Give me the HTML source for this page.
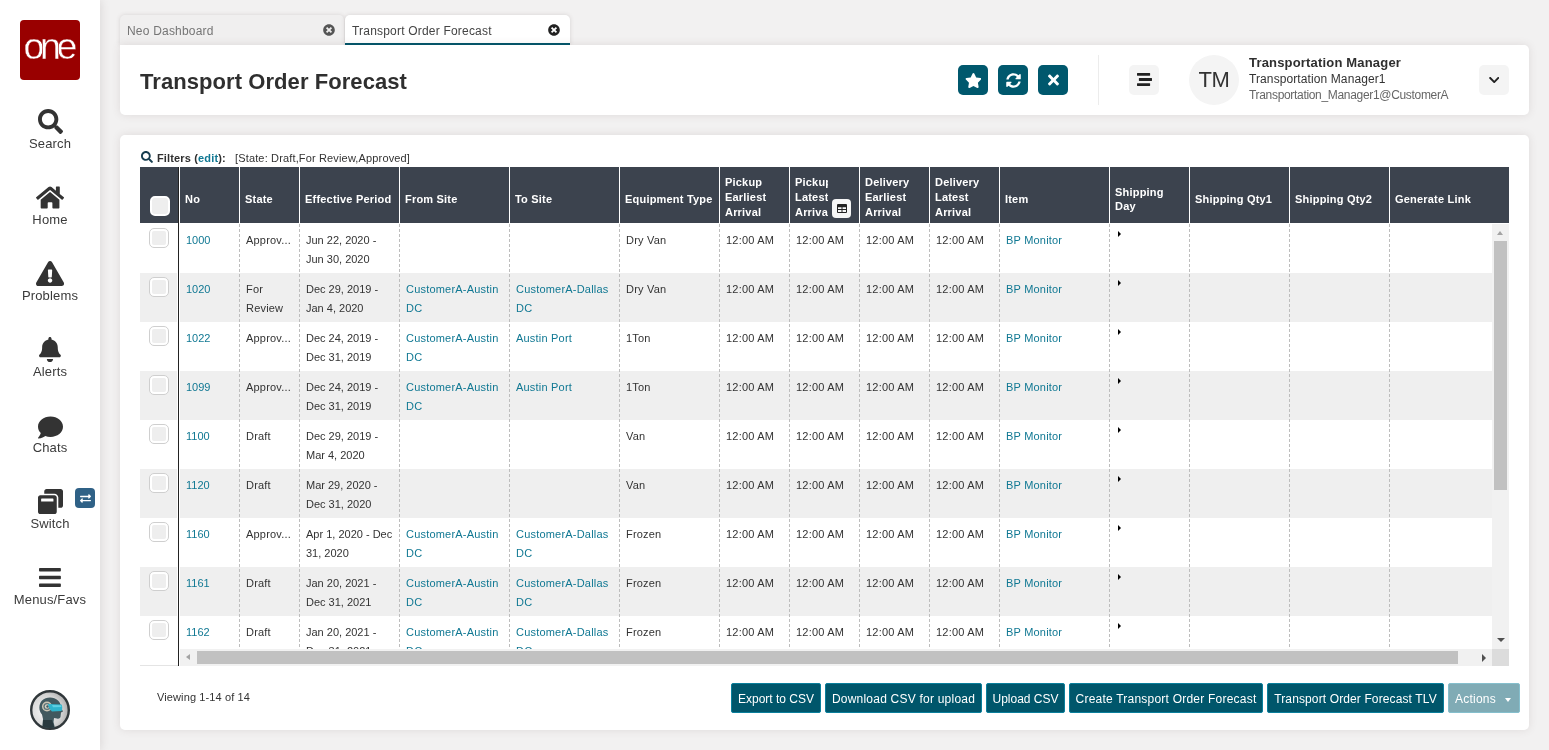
<!DOCTYPE html>
<html lang="en">
<head>
<meta charset="utf-8">
<title>Transport Order Forecast</title>
<style>
*{box-sizing:border-box;margin:0;padding:0}
html,body{width:1549px;height:750px;overflow:hidden}
body{will-change:transform;background:#f2f1f1;font-family:"Liberation Sans","DejaVu Sans",sans-serif;color:#333;position:relative;font-size:11px}
.abs{position:absolute}
#side{left:0;top:0;width:100px;height:750px;background:#fff;box-shadow:0 0 10px rgba(90,70,70,.18)}
#logo{left:20px;top:20px;width:60px;height:60px;background:#990000;border-radius:4px;color:#fff}
.nav{left:0;width:100px;text-align:center;font-size:13px;color:#3a3a3a;line-height:16px;letter-spacing:.15px}
.ico{left:0;width:100px;text-align:center}
.ico svg{display:block;margin:0 auto;fill:#333}
.tab{top:15px;height:30px;font-size:12px;line-height:32px;padding-left:7px;letter-spacing:.2px;white-space:nowrap}
.card{background:#fff;border-radius:5px;box-shadow:0 0 8px rgba(90,70,70,.13)}
.hbtn{width:30px;height:30px;border-radius:5px;background:#00586d;top:65px}
.hbtn svg{position:absolute;fill:#fff}
.gbtn{width:30px;height:30px;border-radius:5px;background:#f4f4f4;top:65px}
</style>
</head>
<body>
<!-- SIDEBAR -->
<div id="side" class="abs"></div>
<div id="logo" class="abs"><svg width="60" height="60" viewBox="0 0 60 60"><text x="3.400" y="39.200" font-family="Liberation Sans, sans-serif" font-size="37.500" fill="#fff" stroke="#990000" stroke-width="0.350" letter-spacing="-4.300">one</text></svg></div>
<div class="abs ico" style="top:108.5px"><svg width="25" height="25" viewBox="0 0 512 512"><path d="M505 442.700L405.300 343c-4.500-4.500-10.600-7-17-7H372c27.600-35.300 44-79.700 44-128C416 93.100 322.900 0 208 0S0 93.100 0 208s93.100 208 208 208c48.300 0 92.700-16.400 128-44v16.300c0 6.400 2.500 12.500 7 17l99.700 99.700c9.400 9.400 24.600 9.400 33.900 0l28.300-28.300c9.400-9.400 9.400-24.600.1-34zM208 336c-70.700 0-128-57.200-128-128 0-70.700 57.200-128 128-128 70.700 0 128 57.200 128 128 0 70.700-57.200 128-128 128z"/></svg></div>
<div class="abs nav" style="top:136px">Search</div>
<div class="abs ico" style="top:184.5px"><svg width="28.1" height="25" viewBox="0 0 576 512"><path d="M280.370 148.260L96 300.110V464a16 16 0 0 0 16 16l112.060-.290a16 16 0 0 0 15.920-16V368a16 16 0 0 1 16-16h64a16 16 0 0 1 16 16v95.640a16 16 0 0 0 16 16.050L464 480a16 16 0 0 0 16-16V300L295.670 148.260a12.190 12.190 0 0 0-15.300 0zM571.600 251.470L488 182.560V44.050a12 12 0 0 0-12-12h-56a12 12 0 0 0-12 12v72.610L318.470 43a48 48 0 0 0-61 0L4.340 251.470a12 12 0 0 0-1.600 16.900l25.500 31A12 12 0 0 0 45.150 301l235.220-193.740a12.190 12.190 0 0 1 15.300 0L530.900 301a12 12 0 0 0 16.900-1.600l25.500-31a12 12 0 0 0-1.700-16.930z"/></svg></div>
<div class="abs nav" style="top:212px">Home</div>
<div class="abs ico" style="top:260.5px"><svg width="28.1" height="25" viewBox="0 0 576 512"><path d="M569.517 440.013C587.975 472.007 564.806 512 527.940 512H48.054c-36.937 0-59.999-40.055-41.577-71.987L246.423 23.985c18.467-32.009 64.720-31.951 83.154 0l239.940 416.028zM288 354c-25.405 0-46 20.595-46 46s20.595 46 46 46 46-20.595 46-46-20.595-46-46-46zm-43.673-165.346l7.418 136c.347 6.364 5.609 11.346 11.982 11.346h48.546c6.373 0 11.635-4.982 11.982-11.346l7.418-136c.375-6.874-5.098-12.654-11.982-12.654h-63.383c-6.884 0-12.356 5.780-11.981 12.654z"/></svg></div>
<div class="abs nav" style="top:288px">Problems</div>
<div class="abs ico" style="top:336.5px"><svg width="21.9" height="25" viewBox="0 0 448 512"><path d="M224 512c35.320 0 63.970-28.650 63.970-64H160.030c0 35.350 28.650 64 63.970 64zm215.390-149.710c-19.320-20.760-55.470-51.990-55.470-154.290 0-77.700-54.480-139.900-127.940-155.160V32c0-17.670-14.320-32-31.980-32s-31.980 14.330-31.980 32v20.840C118.560 68.100 64.080 130.300 64.080 208c0 102.300-36.150 133.530-55.470 154.290-6 6.450-8.660 14.160-8.610 21.710.110 16.400 12.980 32 32.100 32h383.800c19.120 0 32-15.600 32.100-32 .050-7.550-2.610-15.270-8.610-21.710z"/></svg></div>
<div class="abs nav" style="top:364px">Alerts</div>
<div class="abs ico" style="top:414.5px"><svg width="25" height="25" viewBox="0 0 512 512"><path d="M256 32C114.600 32 0 125.100 0 240c0 49.600 21.400 95 57 130.700C44.500 421.100 2.700 466 2.200 466.500c-2.200 2.300-2.800 5.700-1.500 8.700S4.800 480 8 480c66.300 0 116-31.800 140.600-51.400 32.700 12.300 69 19.400 107.400 19.400 141.400 0 256-93.100 256-208S397.400 32 256 32z"/></svg></div>
<div class="abs nav" style="top:440px">Chats</div>
<div class="abs ico" style="top:488.5px"><svg width="25" height="25" viewBox="0 0 512 512"><path d="M512 48v288c0 26.500-21.500 48-48 48h-48V176c0-44.100-35.900-80-80-80H128V48c0-26.500 21.500-48 48-48h288c26.500 0 48 21.500 48 48zM384 176v288c0 26.500-21.500 48-48 48H48c-26.500 0-48-21.500-48-48V176c0-26.500 21.500-48 48-48h288c26.500 0 48 21.500 48 48zm-68 28c0-6.600-5.400-12-12-12H76c-6.600 0-12 5.400-12 12v52h252v-52z"/></svg></div>
<div class="abs" style="left:75px;top:488px;width:20px;height:20px;border-radius:4px;background:#2f6186"><svg style="position:absolute;left:4.500px;top:4.500px;fill:#fff" width="11" height="11" viewBox="0 0 512 512"><path d="M0 168v-16c0-13.255 10.745-24 24-24h360V80c0-21.367 25.899-32.042 40.971-16.971l80 80c9.372 9.373 9.372 24.569 0 33.941l-80 80C409.956 271.982 384 261.456 384 240v-48H24c-13.255 0-24-10.745-24-24zm488 152H128v-48c0-21.314-25.862-32.080-40.971-16.971l-80 80c-9.372 9.373-9.372 24.569 0 33.941l80 80C102.057 463.968 128 453.437 128 432v-48h360c13.255 0 24-10.745 24-24v-16c0-13.255-10.745-24-24-24z"/></svg></div>
<div class="abs nav" style="top:516px">Switch</div>
<div class="abs ico" style="top:564.5px"><svg width="21.9" height="25" viewBox="0 0 448 512"><path d="M16 132h416c8.837 0 16-7.163 16-16V76c0-8.837-7.163-16-16-16H16C7.163 60 0 67.163 0 76v40c0 8.837 7.163 16 16 16zm0 160h416c8.837 0 16-7.163 16-16v-40c0-8.837-7.163-16-16-16H16c-8.837 0-16 7.163-16 16v40c0 8.837 7.163 16 16 16zm0 160h416c8.837 0 16-7.163 16-16v-40c0-8.837-7.163-16-16-16H16c-8.837 0-16 7.163-16 16v40c0 8.837 7.163 16 16 16z"/></svg></div>
<div class="abs nav" style="top:592px">Menus/Favs</div>
<div class="abs" style="left:30px;top:690px;width:40px;height:40px"><svg width="40" height="40" viewBox="0 0 40 40"><defs><radialGradient id="ag" cx="0.35" cy="0.55" r="0.75"><stop offset="0" stop-color="#f4f4f4"/><stop offset="0.6" stop-color="#d4d4d4"/><stop offset="1" stop-color="#9a9a9a"/></radialGradient><clipPath id="ac"><circle cx="20" cy="20" r="18"/></clipPath></defs><circle cx="20" cy="20" r="18.800" fill="url(#ag)" stroke="#30373a" stroke-width="2.400"/><g clip-path="url(#ac)"><path d="M12.500 38 L13 29 L12 24.500 C8.500 21 8.500 14 12 10.500 C16 6.500 24 6.500 28 10.500 C30 12.500 31 15 31 17.500 L33 21.500 L31 22.500 L30.500 27 C30 28.500 28.500 29 27 28.500 L24 28 L23.500 32 L25 38 Z" fill="#41595f"/><path d="M12.500 38 L13 30 L22 30 L24.500 38Z" fill="#2a3a3f"/><circle cx="17" cy="16.500" r="5" fill="#c9c4b4"/><circle cx="17" cy="16.500" r="3.600" fill="#5b7378"/><circle cx="17" cy="16.500" r="2.200" fill="#d8d3c4"/><circle cx="17.500" cy="16.500" r="1.200" fill="#41595f"/><path d="M18 14 L31.500 14.500 C32.500 16.500 32.500 19 31.500 21 L22 21.500 C20 19.500 18.500 17 18 14Z" fill="#2fb4cc"/><path d="M22 15 L31 15.200 L31.500 17 L23 17.200Z" fill="#5fd0e2"/></g></svg></div>

<!-- TABS -->
<div class="abs tab" style="left:120px;width:224px;background:#f0efef;border-radius:5px 5px 0 0;color:#757575;box-shadow:0 0 4px rgba(90,70,70,.18)">Neo Dashboard<svg style="position:absolute;left:203px;top:9px;fill:#555" width="12" height="12" viewBox="0 0 512 512"><path d="M256 8C119 8 8 119 8 256s111 248 248 248 248-111 248-248S393 8 256 8zm121.600 313.100c4.700 4.700 4.700 12.300 0 17L338 377.600c-4.700 4.700-12.300 4.700-17 0L256 312l-65.100 65.600c-4.700 4.700-12.300 4.700-17 0L134.400 338c-4.700-4.700-4.700-12.300 0-17l65.600-65-65.600-65.100c-4.700-4.700-4.700-12.300 0-17l39.600-39.600c4.700-4.700 12.300-4.700 17 0l65 65.700 65.100-65.600c4.700-4.700 12.300-4.700 17 0l39.600 39.600c4.700 4.700 4.700 12.300 0 17L312 256l65.600 65.100z"/></svg></div>
<div class="abs tab" style="left:345px;width:225px;background:#fff;border-radius:5px 5px 0 0;color:#444;box-shadow:0 0 4px rgba(90,70,70,.18)">Transport Order Forecast<svg style="position:absolute;left:203px;top:9px;fill:#222" width="12" height="12" viewBox="0 0 512 512"><path d="M256 8C119 8 8 119 8 256s111 248 248 248 248-111 248-248S393 8 256 8zm121.600 313.100c4.700 4.700 4.700 12.300 0 17L338 377.600c-4.700 4.700-12.300 4.700-17 0L256 312l-65.100 65.600c-4.700 4.700-12.300 4.700-17 0L134.400 338c-4.700-4.700-4.700-12.300 0-17l65.600-65-65.600-65.100c-4.700-4.700-4.700-12.300 0-17l39.600-39.600c4.700-4.700 12.300-4.700 17 0l65 65.700 65.100-65.600c4.700-4.700 12.300-4.700 17 0l39.600 39.600c4.700 4.700 4.700 12.300 0 17L312 256l65.600 65.100z"/></svg><i style="position:absolute;left:0;top:28px;width:225px;height:2px;background:#00566b"></i></div>
<!-- HEADER CARD -->
<div class="abs card" style="left:120px;top:45px;width:1409px;height:70px;border-radius:0 5px 5px 5px"></div>
<div class="abs" id="title" style="left:140px;top:68px;font-size:22px;font-weight:bold;color:#2f2f2f;line-height:28px;letter-spacing:.07px">Transport Order Forecast</div>
<div class="abs hbtn" style="left:958px"><svg style="left:6.560px;top:7.500px" width="16.880" height="15" viewBox="0 0 576 512"><path d="M259.300 17.800L194 150.200 47.900 171.500c-26.200 3.800-36.700 36.100-17.700 54.600l105.700 103-25 145.500c-4.500 26.300 23.200 46 46.400 33.700L288 439.600l130.700 68.700c23.200 12.200 50.900-7.400 46.400-33.700l-25-145.500 105.700-103c19-18.500 8.500-50.800-17.700-54.600L382 150.200 316.700 17.800c-11.700-23.600-45.600-23.900-57.400 0z"/></svg></div>
<div class="abs hbtn" style="left:998px"><svg style="left:7.500px;top:7.500px" width="15" height="15" viewBox="0 0 512 512"><path d="M370.720 133.280C339.458 104.008 298.888 87.962 255.848 88c-77.458.068-144.328 53.178-162.791 126.850-1.344 5.363-6.122 9.150-11.651 9.150H24.103c-7.498 0-13.194-6.807-11.807-14.176C33.933 94.924 134.813 8 256 8c66.448 0 126.791 26.136 171.315 68.685L463.030 40.970C478.149 25.851 504 36.559 504 57.941V192c0 13.255-10.745 24-24 24H345.941c-21.382 0-32.090-25.851-16.971-40.971l41.750-41.749zM32 296h134.059c21.382 0 32.090 25.851 16.971 40.971l-41.750 41.750c31.262 29.273 71.835 45.319 114.876 45.280 77.418-.070 144.315-53.144 162.787-126.849 1.344-5.363 6.122-9.150 11.651-9.150h57.304c7.498 0 13.194 6.807 11.807 14.176C478.067 417.076 377.187 504 256 504c-66.448 0-126.791-26.136-171.315-68.685L48.970 471.030C33.851 486.149 8 475.441 8 454.059V320c0-13.255 10.745-24 24-24z"/></svg></div>
<div class="abs hbtn" style="left:1038px"><svg style="left:9.500px;top:6.500px" width="11" height="16" viewBox="0 0 352 512"><path d="M242.720 256l100.070-100.070c12.280-12.280 12.280-32.190 0-44.480l-22.240-22.240c-12.280-12.280-32.190-12.280-44.480 0L176 189.280 75.930 89.210c-12.280-12.280-32.190-12.280-44.480 0L9.210 111.450c-12.280 12.280-12.280 32.190 0 44.480L109.280 256 9.210 356.070c-12.280 12.280-12.280 32.190 0 44.480l22.240 22.240c12.280 12.280 32.200 12.280 44.480 0L176 322.720l100.070 100.070c12.280 12.280 32.200 12.280 44.480 0l22.240-22.240c12.280-12.280 12.280-32.190 0-44.480L242.720 256z"/></svg></div>
<div class="abs" style="left:1098px;top:55px;width:1px;height:50px;background:#ececec"></div>
<div class="abs gbtn" style="left:1129px"><svg style="position:absolute;left:7.500px;top:7px;fill:#222" width="15" height="15" viewBox="0 0 512 512"><path d="M16 128h416c8.840 0 16-7.160 16-16V48c0-8.840-7.160-16-16-16H16C7.160 32 0 39.160 0 48v64c0 8.840 7.160 16 16 16zm480 80H80c-8.840 0-16 7.160-16 16v64c0 8.840 7.160 16 16 16h416c8.840 0 16-7.160 16-16v-64c0-8.840-7.160-16-16-16zm-64 176H16c-8.840 0-16 7.160-16 16v64c0 8.840 7.160 16 16 16h416c8.840 0 16-7.160 16-16v-64c0-8.840-7.160-16-16-16z"/></svg></div>
<div class="abs" style="left:1189px;top:55px;width:50px;height:50px;border-radius:50%;background:#f4f4f4;text-align:center;font-size:22px;line-height:50px;color:#333;letter-spacing:-.5px">TM</div>
<div class="abs" style="left:1249px;top:55px;font-size:13px;font-weight:bold;color:#2f2f2f;line-height:16px;letter-spacing:.18px;white-space:nowrap">Transportation Manager</div>
<div class="abs" style="left:1249px;top:71px;font-size:12px;color:#333;line-height:16px;letter-spacing:.1px;white-space:nowrap">Transportation Manager1</div>
<div class="abs" style="left:1249px;top:87px;font-size:12px;color:#666;line-height:16px;letter-spacing:-.32px;white-space:nowrap">Transportation_Manager1@CustomerA</div>
<div class="abs gbtn" style="left:1479px"><svg style="position:absolute;left:9.750px;top:9px;fill:#222" width="10.500" height="12" viewBox="0 0 448 512"><path d="M207.029 381.476L12.686 187.132c-9.373-9.373-9.373-24.569 0-33.941l22.667-22.667c9.357-9.357 24.522-9.375 33.901-.040L224 284.505l154.745-154.021c9.379-9.335 24.544-9.317 33.901.040l22.667 22.667c9.373 9.373 9.373 24.569 0 33.941L240.971 381.476c-9.373 9.372-24.569 9.372-33.942 0z"/></svg></div>
<!-- MAIN CARD -->
<div class="abs card" style="left:120px;top:135px;width:1409px;height:595px"></div>
<!--GRID_S--><style>
#grid{left:140px;top:167px;width:1369px;height:499px;overflow:hidden}
#grid .h{position:absolute;top:0;height:56px;background:#3c434e;color:#fff;font-weight:bold;font-size:11px;line-height:14.5px;padding:8px 0 0 5px;display:flex;align-items:center;letter-spacing:.2px;white-space:nowrap;overflow:hidden}
#grid .hs{position:absolute;top:1px;width:1px;height:55px;background:#fff}
#body{position:absolute;left:0;top:57px;width:1369px;height:425px;overflow:hidden}
.r{position:absolute;left:0;width:1369px;height:49px}
.r.g .bg{background:#efefef}
.bg{position:absolute;top:0;height:49px}
.c{position:absolute;top:7px;font-size:11px;line-height:19px;color:#333;letter-spacing:.2px;white-space:nowrap}
.c.l{color:#107893}
.c.n{letter-spacing:0}
.cb{position:absolute;left:9px;top:4px;width:20px;height:20px;border:1px solid #cfcfcf;border-radius:5px;background:#fff}
.cb i{position:absolute;left:2px;top:2px;width:14px;height:14px;border-radius:2px;background:#eee}
.ds{position:absolute;top:57px;width:1px;height:425px;background:repeating-linear-gradient(to bottom,#bdbdbd 0,#bdbdbd 3px,transparent 3px,transparent 5px)}
.tri{position:absolute;top:7px;width:0;height:0;border-left:3.500px solid #000;border-top:3px solid transparent;border-bottom:3px solid transparent}

</style>
<div id="grid" class="abs">
<div class="h" style="left:0;width:38px"></div>
<div style="position:absolute;left:10px;top:29px;width:20px;height:20px;border:2px solid #fff;border-radius:5px;background:#eee"></div>
<div class="h" style="left:40px;width:59px">No</div>
<div class="hs" style="left:99px"></div>
<div class="h" style="left:100px;width:59px">State</div>
<div class="hs" style="left:159px"></div>
<div class="h" style="left:160px;width:99px">Effective Period</div>
<div class="hs" style="left:259px"></div>
<div class="h" style="left:260px;width:109px">From Site</div>
<div class="hs" style="left:369px"></div>
<div class="h" style="left:370px;width:109px">To Site</div>
<div class="hs" style="left:479px"></div>
<div class="h" style="left:480px;width:99px">Equipment Type</div>
<div class="hs" style="left:579px"></div>
<div class="h" style="left:580px;width:69px;padding-top:5px;line-height:15px">Pickup<br>Earliest<br>Arrival</div>
<div class="hs" style="left:649px"></div>
<div class="h" style="left:650px;width:69px"></div>
<div class="h" style="left:650px;width:38px;padding-left:5px;padding-top:5px;line-height:15px;background:none">Pickup<br>Latest<br>Arrival</div>
<div class="hs" style="left:719px"></div>
<div class="h" style="left:720px;width:69px;padding-top:5px;line-height:15px">Delivery<br>Earliest<br>Arrival</div>
<div class="hs" style="left:789px"></div>
<div class="h" style="left:790px;width:69px;padding-top:5px;line-height:15px">Delivery<br>Latest<br>Arrival</div>
<div class="hs" style="left:859px"></div>
<div class="h" style="left:860px;width:109px">Item</div>
<div class="hs" style="left:969px"></div>
<div class="h" style="left:970px;width:79px">Shipping<br>Day</div>
<div class="hs" style="left:1049px"></div>
<div class="h" style="left:1050px;width:99px">Shipping Qty1</div>
<div class="hs" style="left:1149px"></div>
<div class="h" style="left:1150px;width:99px">Shipping Qty2</div>
<div class="hs" style="left:1249px"></div>
<div class="h" style="left:1250px;width:119px">Generate Link</div>
<div style="position:absolute;left:692px;top:32px;width:19px;height:19px;border-radius:4px;background:#f6f6f6"><svg style="position:absolute;left:5px;top:5px" width="10" height="9" viewBox="0 0 10 9"><path fill="#222" fill-rule="evenodd" d="M1 0h8a1 1 0 0 1 1 1v7a1 1 0 0 1-1 1H1a1 1 0 0 1-1-1V1a1 1 0 0 1 1-1zM1 3.200v1.900h3.500V3.200zM5.500 3.200v1.900H9V3.200zM1 6.100V8h3.500V6.100zM5.500 6.100V8H9V6.100z"/></svg></div>
<div id="body">
<div class="r" style="top:0px">
<div class="bg" style="left:0;width:37px"></div><div class="bg" style="left:40px;width:1329px"></div>
<div class="cb"><i></i></div>
<div class="c l n" style="left:46px">1000</div>
<div class="c" style="left:106px">Approv...</div>
<div class="c n" style="left:166px">Jun 22, 2020 -<br>Jun 30, 2020</div>
<div class="c" style="left:486px">Dry Van</div>
<div class="c" style="left:586px">12:00 AM</div>
<div class="c" style="left:656px">12:00 AM</div>
<div class="c" style="left:726px">12:00 AM</div>
<div class="c" style="left:796px">12:00 AM</div>
<div class="c l" style="left:866px">BP Monitor</div>
<div class="tri" style="left:978px"></div>
</div>
<div class="r g" style="top:49px">
<div class="bg" style="left:0;width:37px"></div><div class="bg" style="left:40px;width:1329px"></div>
<div class="cb"><i></i></div>
<div class="c l n" style="left:46px">1020</div>
<div class="c" style="left:106px">For<br>Review</div>
<div class="c n" style="left:166px">Dec 29, 2019 -<br>Jan 4, 2020</div>
<div class="c l" style="left:266px">CustomerA-Austin<br>DC</div>
<div class="c l" style="left:376px">CustomerA-Dallas<br>DC</div>
<div class="c" style="left:486px">Dry Van</div>
<div class="c" style="left:586px">12:00 AM</div>
<div class="c" style="left:656px">12:00 AM</div>
<div class="c" style="left:726px">12:00 AM</div>
<div class="c" style="left:796px">12:00 AM</div>
<div class="c l" style="left:866px">BP Monitor</div>
<div class="tri" style="left:978px"></div>
</div>
<div class="r" style="top:98px">
<div class="bg" style="left:0;width:37px"></div><div class="bg" style="left:40px;width:1329px"></div>
<div class="cb"><i></i></div>
<div class="c l n" style="left:46px">1022</div>
<div class="c" style="left:106px">Approv...</div>
<div class="c n" style="left:166px">Dec 24, 2019 -<br>Dec 31, 2019</div>
<div class="c l" style="left:266px">CustomerA-Austin<br>DC</div>
<div class="c l" style="left:376px">Austin Port</div>
<div class="c" style="left:486px">1Ton</div>
<div class="c" style="left:586px">12:00 AM</div>
<div class="c" style="left:656px">12:00 AM</div>
<div class="c" style="left:726px">12:00 AM</div>
<div class="c" style="left:796px">12:00 AM</div>
<div class="c l" style="left:866px">BP Monitor</div>
<div class="tri" style="left:978px"></div>
</div>
<div class="r g" style="top:147px">
<div class="bg" style="left:0;width:37px"></div><div class="bg" style="left:40px;width:1329px"></div>
<div class="cb"><i></i></div>
<div class="c l n" style="left:46px">1099</div>
<div class="c" style="left:106px">Approv...</div>
<div class="c n" style="left:166px">Dec 24, 2019 -<br>Dec 31, 2019</div>
<div class="c l" style="left:266px">CustomerA-Austin<br>DC</div>
<div class="c l" style="left:376px">Austin Port</div>
<div class="c" style="left:486px">1Ton</div>
<div class="c" style="left:586px">12:00 AM</div>
<div class="c" style="left:656px">12:00 AM</div>
<div class="c" style="left:726px">12:00 AM</div>
<div class="c" style="left:796px">12:00 AM</div>
<div class="c l" style="left:866px">BP Monitor</div>
<div class="tri" style="left:978px"></div>
</div>
<div class="r" style="top:196px">
<div class="bg" style="left:0;width:37px"></div><div class="bg" style="left:40px;width:1329px"></div>
<div class="cb"><i></i></div>
<div class="c l n" style="left:46px">1100</div>
<div class="c" style="left:106px">Draft</div>
<div class="c n" style="left:166px">Dec 29, 2019 -<br>Mar 4, 2020</div>
<div class="c" style="left:486px">Van</div>
<div class="c" style="left:586px">12:00 AM</div>
<div class="c" style="left:656px">12:00 AM</div>
<div class="c" style="left:726px">12:00 AM</div>
<div class="c" style="left:796px">12:00 AM</div>
<div class="c l" style="left:866px">BP Monitor</div>
<div class="tri" style="left:978px"></div>
</div>
<div class="r g" style="top:245px">
<div class="bg" style="left:0;width:37px"></div><div class="bg" style="left:40px;width:1329px"></div>
<div class="cb"><i></i></div>
<div class="c l n" style="left:46px">1120</div>
<div class="c" style="left:106px">Draft</div>
<div class="c n" style="left:166px">Mar 29, 2020 -<br>Dec 31, 2020</div>
<div class="c" style="left:486px">Van</div>
<div class="c" style="left:586px">12:00 AM</div>
<div class="c" style="left:656px">12:00 AM</div>
<div class="c" style="left:726px">12:00 AM</div>
<div class="c" style="left:796px">12:00 AM</div>
<div class="c l" style="left:866px">BP Monitor</div>
<div class="tri" style="left:978px"></div>
</div>
<div class="r" style="top:294px">
<div class="bg" style="left:0;width:37px"></div><div class="bg" style="left:40px;width:1329px"></div>
<div class="cb"><i></i></div>
<div class="c l n" style="left:46px">1160</div>
<div class="c" style="left:106px">Approv...</div>
<div class="c n" style="left:166px">Apr 1, 2020 - Dec<br>31, 2020</div>
<div class="c l" style="left:266px">CustomerA-Austin<br>DC</div>
<div class="c l" style="left:376px">CustomerA-Dallas<br>DC</div>
<div class="c" style="left:486px">Frozen</div>
<div class="c" style="left:586px">12:00 AM</div>
<div class="c" style="left:656px">12:00 AM</div>
<div class="c" style="left:726px">12:00 AM</div>
<div class="c" style="left:796px">12:00 AM</div>
<div class="c l" style="left:866px">BP Monitor</div>
<div class="tri" style="left:978px"></div>
</div>
<div class="r g" style="top:343px">
<div class="bg" style="left:0;width:37px"></div><div class="bg" style="left:40px;width:1329px"></div>
<div class="cb"><i></i></div>
<div class="c l n" style="left:46px">1161</div>
<div class="c" style="left:106px">Draft</div>
<div class="c n" style="left:166px">Jan 20, 2021 -<br>Dec 31, 2021</div>
<div class="c l" style="left:266px">CustomerA-Austin<br>DC</div>
<div class="c l" style="left:376px">CustomerA-Dallas<br>DC</div>
<div class="c" style="left:486px">Frozen</div>
<div class="c" style="left:586px">12:00 AM</div>
<div class="c" style="left:656px">12:00 AM</div>
<div class="c" style="left:726px">12:00 AM</div>
<div class="c" style="left:796px">12:00 AM</div>
<div class="c l" style="left:866px">BP Monitor</div>
<div class="tri" style="left:978px"></div>
</div>
<div class="r" style="top:392px">
<div class="bg" style="left:0;width:37px"></div><div class="bg" style="left:40px;width:1329px"></div>
<div class="cb"><i></i></div>
<div class="c l n" style="left:46px">1162</div>
<div class="c" style="left:106px">Draft</div>
<div class="c n" style="left:166px">Jan 20, 2021 -<br>Dec 31, 2021</div>
<div class="c l" style="left:266px">CustomerA-Austin<br>DC</div>
<div class="c l" style="left:376px">CustomerA-Dallas<br>DC</div>
<div class="c" style="left:486px">Frozen</div>
<div class="c" style="left:586px">12:00 AM</div>
<div class="c" style="left:656px">12:00 AM</div>
<div class="c" style="left:726px">12:00 AM</div>
<div class="c" style="left:796px">12:00 AM</div>
<div class="c l" style="left:866px">BP Monitor</div>
<div class="tri" style="left:978px"></div>
</div>
</div>
<div class="ds" style="left:99px"></div>
<div class="ds" style="left:159px"></div>
<div class="ds" style="left:259px"></div>
<div class="ds" style="left:369px"></div>
<div class="ds" style="left:479px"></div>
<div class="ds" style="left:579px"></div>
<div class="ds" style="left:649px"></div>
<div class="ds" style="left:719px"></div>
<div class="ds" style="left:789px"></div>
<div class="ds" style="left:859px"></div>
<div class="ds" style="left:969px"></div>
<div class="ds" style="left:1049px"></div>
<div class="ds" style="left:1149px"></div>
<div class="ds" style="left:1249px"></div>
<div style="position:absolute;left:38px;top:0;width:1px;height:499px;background:#222"></div>
<div style="position:absolute;left:39px;top:0;width:1px;height:499px;background:#fff"></div>
<div style="position:absolute;left:37px;top:56px;width:1px;height:442px;background:#fff"></div>
<div style="position:absolute;left:1352px;top:57px;width:17px;height:425px;background:#f1f1f1"></div>
<div style="position:absolute;left:1354px;top:74px;width:13px;height:249px;background:#c1c1c1"></div>
<div style="position:absolute;left:1357px;top:64px;width:0;height:0;border-bottom:4px solid #a3a3a3;border-left:3.500px solid transparent;border-right:3.500px solid transparent"></div>
<div style="position:absolute;left:1356.500px;top:471px;width:0;height:0;border-top:4px solid #505050;border-left:4px solid transparent;border-right:4px solid transparent"></div>
<div style="position:absolute;left:40px;top:482px;width:1312px;height:17px;background:#f1f1f1"></div>
<div style="position:absolute;left:1352px;top:482px;width:17px;height:17px;background:#dcdcdc"></div>
<div style="position:absolute;left:57px;top:484px;width:1261px;height:13px;background:#c1c1c1"></div>
<div style="position:absolute;left:46px;top:487px;width:0;height:0;border-right:4.500px solid #a3a3a3;border-top:3.500px solid transparent;border-bottom:3.500px solid transparent"></div>
<div style="position:absolute;left:1342px;top:486.500px;width:0;height:0;border-left:4.500px solid #505050;border-top:4px solid transparent;border-bottom:4px solid transparent"></div>
</div>
<div class="abs" style="left:140px;top:665px;width:38px;height:1px;background:#e4e4e4"></div>
<div class="abs" style="left:141px;top:151px"><svg width="12" height="12" viewBox="0 0 512 512" style="display:block;fill:#173e50"><path d="M505 442.700L405.300 343c-4.500-4.500-10.600-7-17-7H372c27.600-35.300 44-79.700 44-128C416 93.100 322.900 0 208 0S0 93.100 0 208s93.100 208 208 208c48.300 0 92.700-16.400 128-44v16.300c0 6.400 2.500 12.500 7 17l99.700 99.700c9.400 9.400 24.600 9.400 33.900 0l28.300-28.300c9.400-9.400 9.400-24.600.1-34zM208 336c-70.700 0-128-57.200-128-128 0-70.700 57.200-128 128-128 70.700 0 128 57.200 128 128 0 70.700-57.200 128-128 128z"/></svg></div>
<div class="abs" style="left:157px;top:150px;font-size:11px;line-height:16px;font-weight:bold;color:#2f2f2f;letter-spacing:.15px;white-space:nowrap">Filters (<span style="color:#107893">edit</span>):</div>
<div class="abs" style="left:235px;top:150px;font-size:11px;line-height:16px;color:#333;letter-spacing:.15px;white-space:nowrap">[State: Draft,For Review,Approved]</div><!--GRID_E-->
<!--FOOT_S--><style>
.fb{top:683px;height:30px;background:#00566b;border:1px solid #0a7f9c;border-radius:2px;color:#fff;font-size:12px;line-height:30px;text-align:center;letter-spacing:.22px;white-space:nowrap}
</style>
<div class="abs" style="left:157px;top:689px;font-size:11px;line-height:16px;color:#333;letter-spacing:.12px;white-space:nowrap">Viewing 1-14 of 14</div>
<div class="abs fb" style="left:731px;width:90px;letter-spacing:0">Export to CSV</div>
<div class="abs fb" style="left:825px;width:157px">Download CSV for upload</div>
<div class="abs fb" style="left:986px;width:79px;letter-spacing:0">Upload CSV</div>
<div class="abs fb" style="left:1069px;width:194px">Create Transport Order Forecast</div>
<div class="abs fb" style="left:1267px;width:177px;letter-spacing:.12px">Transport Order Forecast TLV</div>
<div class="abs fb" style="left:1448px;width:72px;background:#80abb5;border-color:#85bfcd;text-align:left;padding-left:6px">Actions<span style="position:absolute;left:55.500px;top:13.500px;width:0;height:0;border-top:4px solid #fff;border-left:3.500px solid transparent;border-right:3.500px solid transparent"></span></div>
<!--FOOT_E-->
</body>
</html>
